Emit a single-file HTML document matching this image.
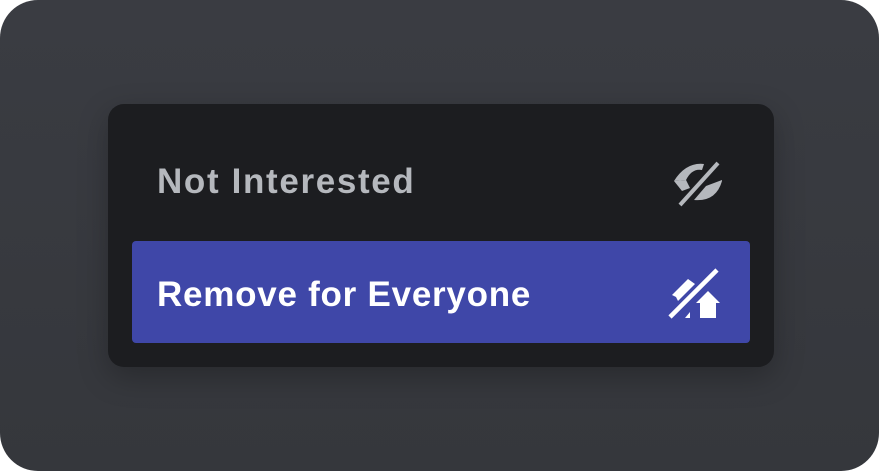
<!DOCTYPE html><html><head><style>
body{margin:0;width:879px;height:471px;background:#fff;overflow:hidden;font-family:"Liberation Sans",sans-serif}
.bg{position:absolute;left:0;top:0;width:879px;height:471px;border-radius:38px;background:linear-gradient(#3a3c42,#35373c)}
.menu{position:absolute;left:108px;top:104px;width:666px;height:263px;border-radius:16px;background:#1c1d20;box-shadow:0 10px 30px rgba(0,0,0,.25)}
.item{position:absolute;left:24px;width:618px;height:102px;border-radius:4px;font-weight:bold;font-size:35px}
.t{position:absolute;left:25px;top:32px}
.i1{top:26px;color:#b5b8bd}
.i1 .t{letter-spacing:1.65px}
.i2{top:137px;background:#3f47a8;color:#fff}
.i2 .t{letter-spacing:0.75px;top:34px}
svg{position:absolute}
</style></head><body>
<div class="bg"></div>
<div class="menu">
<div class="item i1"><span class="t">Not Interested</span>
<svg style="left:540px;top:28px" width="54" height="50" viewBox="0 0 54 50">
<path d="M2 23 Q14 4 32 6 L30 12 Q20 10 14 22 Z" fill="#b5b8bd"/>
<path d="M2 23 L14 22 L18 30 L10 33 Z" fill="#b5b8bd"/>
<path d="M50 23 Q44 44 22 42 L34 28 L50 22 Z" fill="#b5b8bd"/>
<path d="M8 47 L46 5" stroke="#b5b8bd" stroke-width="4"/>
</svg></div>
<div class="item i2"><span class="t">Remove for Everyone</span>
<svg style="left:536px;top:24px" width="56" height="56" viewBox="0 0 56 56">
<path d="M2 52 L49 5" stroke="#fff" stroke-width="4.5"/>
<path d="M4 30 L20 14 L27 19 L10 36 L8 32 Z" fill="#fff"/>
<path d="M32 53 V38 H28 L40 26 L52 38 H48 V53 Z" fill="#fff"/>
<path d="M17 53 L22 47 V53 Z" fill="#fff"/>
</svg></div>
</div>
</body></html>
